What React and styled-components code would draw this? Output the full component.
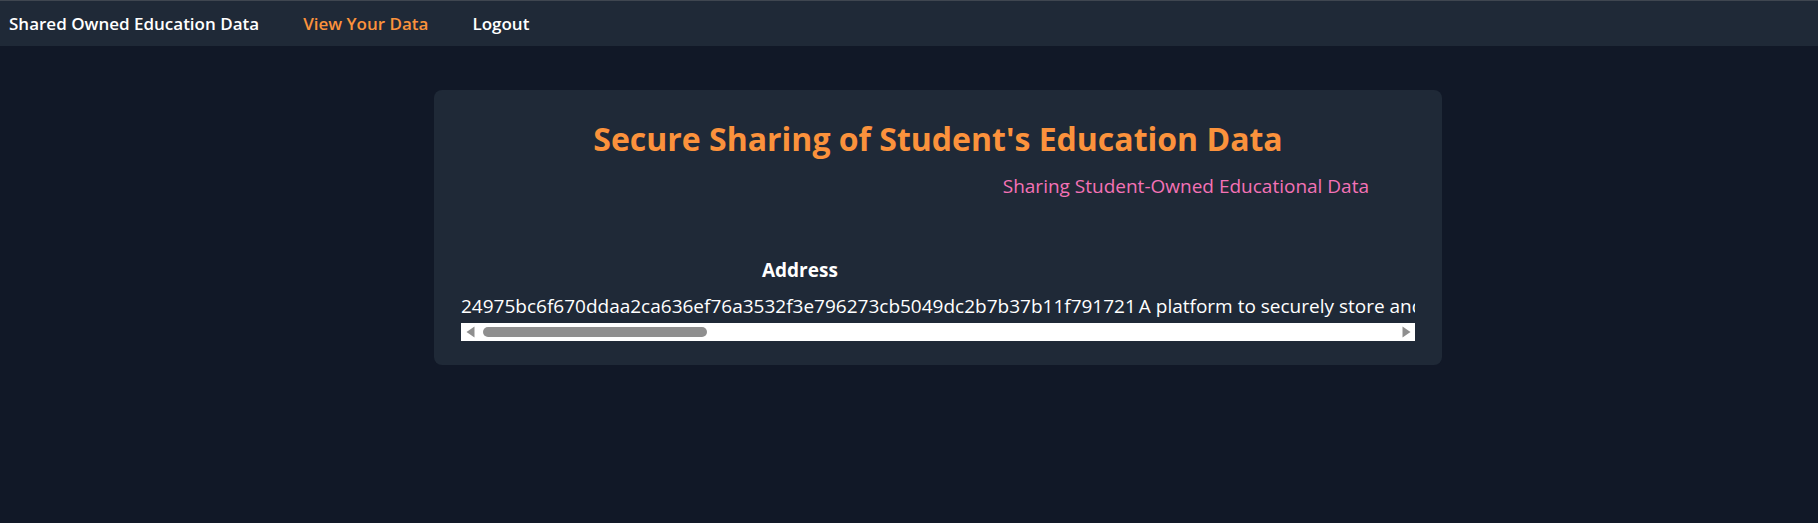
import styled, { createGlobalStyle } from "styled-components";

const GlobalStyle = createGlobalStyle`
  body {
    margin: 0;
    background: #111827;
    font-family: "Open Sans", "Noto Sans", sans-serif;
    color: #ffffff;
  }
`;

const Nav = styled.nav`
  display: flex;
  align-items: center;
  gap: 44px;
  height: 45px;
  padding: 0 9px;
  background: #1f2937;
  border-top: 1px solid #3f4650;
`;

const NavLink = styled.a`
  font-size: 17px;
  font-weight: 600;
  color: ${(p) => (p.$active ? "#fb923c" : "#ffffff")};
  text-decoration: none;
  cursor: pointer;
`;

const Card = styled.section`
  width: 1008px;
  box-sizing: border-box;
  margin: 44px 0 0 434px;
  padding: 31px 27px 24px;
  background: #1f2937;
  border-radius: 8px;
`;

const Title = styled.h1`
  margin: 0;
  font-size: 32px;
  line-height: 36px;
  font-weight: 700;
  color: #fb923c;
  text-align: center;
`;

const Subtitle = styled.p`
  margin: 15px 0 0;
  padding-right: 46px;
  font-size: 19px;
  line-height: 28px;
  color: #f472b6;
  text-align: right;
`;

const TableArea = styled.div`
  margin-top: 56px;
`;

const TableScroll = styled.div`
  overflow: hidden;
`;

const Table = styled.table`
  border-collapse: collapse;
  white-space: nowrap;
`;

const Th = styled.th`
  padding: 0 0 8px;
  font-size: 19px;
  line-height: 28px;
  font-weight: 700;
  text-align: center;
`;

const Td = styled.td`
  padding: 0 3px 3px 0;
  font-size: 19px;
  line-height: 28px;
`;

const ScrollBar = styled.div`
  display: flex;
  align-items: center;
  height: 18px;
  background: #ffffff;
`;

const ArrowButton = styled.div`
  display: flex;
  align-items: center;
  justify-content: center;
  width: 18px;
  height: 18px;
  flex: none;
`;

const Track = styled.div`
  flex: 1;
  display: flex;
  align-items: center;
  height: 100%;
`;

const Thumb = styled.div`
  width: ${(p) => p.$width}px;
  height: 10px;
  margin-left: ${(p) => p.$offset}px;
  border-radius: 5px;
  background: #8f8f8f;
`;

const Arrow = ({ dir }) => (
  <svg width="9" height="12" viewBox="0 0 9 12">
    {dir === "left" ? (
      <path d="M0.5 6 L8.5 0.5 L8.5 11.5 Z" fill="#8f8f8f" />
    ) : (
      <path d="M8.5 6 L0.5 0.5 L0.5 11.5 Z" fill="#8f8f8f" />
    )}
  </svg>
);

const records = [
  {
    address: "24975bc6f670ddaa2ca636ef76a3532f3e796273cb5049dc2b7b37b11f791721",
    description:
      "A platform to securely store and share student-owned educational data, including transcripts, certificates, course records and achievements, giving learners full control over who can access their records through blockchain-based verification and consent-driven sharing between students, schools, universities and employers. Every record is hashed and anchored so that institutions can verify authenticity without exposing personal details.",
  },
];

export default function App() {
  return (
    <>
      <GlobalStyle />
      <Nav>
        <NavLink>Shared Owned Education Data</NavLink>
        <NavLink $active>View Your Data</NavLink>
        <NavLink>Logout</NavLink>
      </Nav>
      <Card>
        <Title>Secure Sharing of Student's Education Data</Title>
        <Subtitle>Sharing Student-Owned Educational Data</Subtitle>
        <TableArea>
          <TableScroll>
            <Table>
              <thead>
                <tr>
                  <Th>Address</Th>
                  <Th>Description</Th>
                </tr>
              </thead>
              <tbody>
                {records.map((r) => (
                  <tr key={r.address}>
                    <Td>{r.address}</Td>
                    <Td>{r.description}</Td>
                  </tr>
                ))}
              </tbody>
            </Table>
          </TableScroll>
          <ScrollBar>
            <ArrowButton>
              <Arrow dir="left" />
            </ArrowButton>
            <Track>
              <Thumb $width={224} $offset={4} />
            </Track>
            <ArrowButton>
              <Arrow dir="right" />
            </ArrowButton>
          </ScrollBar>
        </TableArea>
      </Card>
    </>
  );
}
